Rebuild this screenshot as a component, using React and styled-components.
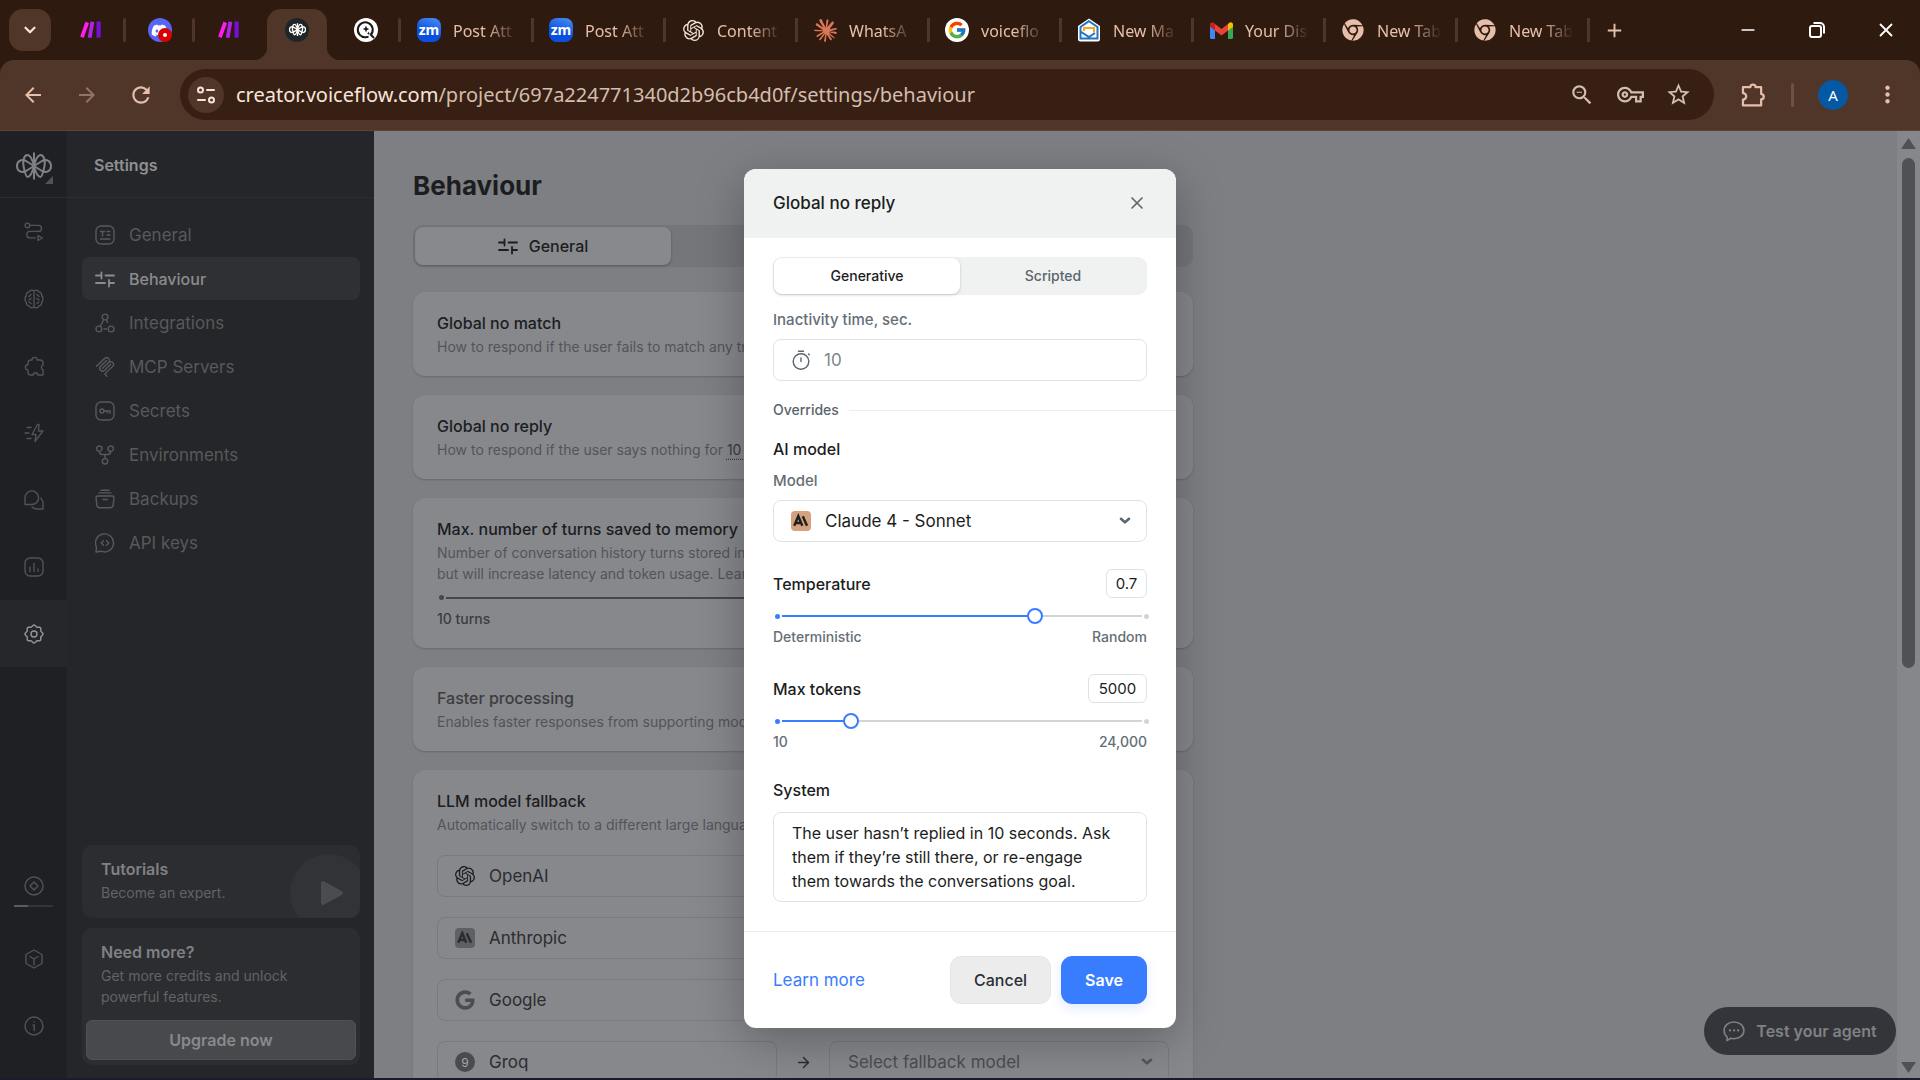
import { useState } from "react";
import styled, { createGlobalStyle } from "styled-components";
import { FaDiscord, FaChrome, FaGoogle } from "react-icons/fa";
import { FcGoogle } from "react-icons/fc";
import { SiOpenai, SiClaude } from "react-icons/si";
import {
  MdArrowBack,
  MdArrowForward,
  MdRefresh,
  MdOutlineVpnKey,
  MdStarOutline,
  MdZoomOut,
  MdMoreVert,
  MdAdd,
} from "react-icons/md";
import { ChevronDown, Minus, X, ArrowRight } from "lucide-react";

const GlobalStyle = createGlobalStyle`
  * {
    box-sizing: border-box;
  }

  body {
    margin: 0;
    font-family: Inter, "Liberation Sans", sans-serif;
    font-size: 16px;
    color: #1b1d21;
  }

  button,
  input,
  select,
  textarea {
    font: inherit;
    color: inherit;
  }

  button {
    border: 0;
    padding: 0;
    background: none;
  }

  h1,
  h2,
  h3,
  p {
    margin: 0;
  }
`;

/* ---------- icons ---------- */

const Line = styled.svg.attrs({ viewBox: "0 0 20 20" })`
  width: ${(p) => p.$size || 20}px;
  height: ${(p) => p.$size || 20}px;
  flex: none;
  fill: none;
  stroke: currentColor;
  stroke-width: 1.4;
  stroke-linecap: round;
  stroke-linejoin: round;
`;

// wavy ring of the settings gear
const scallop = (() => {
  let d = "";
  for (let i = 0; i <= 96; i++) {
    const a = (i / 96) * Math.PI * 2;
    const r = 8.2 + 0.8 * Math.cos(8 * a);
    const x = (10 + r * Math.cos(a)).toFixed(2);
    const y = (10 + r * Math.sin(a)).toFixed(2);
    d += `${i ? "L" : "M"}${x} ${y}`;
  }
  return d + "Z";
})();

const VoiceflowLogo = ({ width, stroke = 2 }) => (
  <svg
    width={width}
    viewBox="0 0 36 28"
    fill="none"
    stroke="currentColor"
    strokeWidth={stroke}
    strokeLinejoin="round"
  >
    <path d="M18 .5v27" />
    <path d="M18 14C16.500 8 14 3 11.500 3 8 3 6.500 9 7.500 14s2.500 11 4 11c2.500 0 5-5 6.500-11" />
    <path d="M18 14c1.500-6 4-11 6.500-11C28 3 29.500 9 28.500 14s-2.500 11-4 11c-2.500 0-5-5-6.500-11" />
    <path d="M18 14 10 9C5 6.500 1 9.500 1 14s4 7.500 9 5l8-5" />
    <path d="M18 14l8-5c5-2.500 9 .5 9 5s-4 7.500-9 5l-8-5" />
  </svg>
);

const icons = {
  route: (
    <>
      <circle cx="3.4" cy="3.4" r="2.3" />
      <path d="M6 3.4h8.500a3 3 0 0 1 0 6H6a3.200 3.200 0 0 0 0 6.500h5.500" />
      <path d="M14 13.500v5l4.500-2.500z" />
    </>
  ),
  brain: (
    <>
      <path d="M10 2C8.500.6 6 .9 5 3 3 3.200 2 5 2.400 6.600.6 8 .6 12 2.400 13.400 2 15 3 16.800 5 17c1 2.100 3.500 2.400 5 1 1.500 1.400 4 1.100 5-1 2-.2 3-2 2.600-3.600 1.800-1.400 1.800-5.400 0-6.800C18 5 17 3.200 15 3c-1-2.100-3.500-2.400-5-1zM10 2v16" />
      <path d="M7 5.500 5 7.500M7.200 9.500 5 10.800M5.200 13l1.800 1.500M13 5.500l2 2M12.800 9.500l2.200 1.300M14.800 13 13 14.500" />
    </>
  ),
  puzzle: (
    <path d="M8 4a2.600 2.600 0 0 1 5.200 0h3A2.800 2.800 0 0 1 19 6.800v2.400a2.300 2.300 0 0 0 0 4.400V19h-5.300a2.200 2.200 0 0 0-4.400 0H6.800A2.800 2.800 0 0 1 4 16.200V14a2.600 2.600 0 0 1 0-5.200v-2A2.800 2.800 0 0 1 6.800 4z" />
  ),
  zap: (
    <path d="M13.500 1.500 8 11.500h4l-1 7L19 8h-4.500l.5-6.500zM3 4.500h4M1 10h4M3 15.500h4" />
  ),
  chats: (
    <>
      <path d="M1 14.500V7.700a6.800 6.800 0 1 1 6.800 6.800z" />
      <path d="M16.800 8.200A7 7 0 0 1 19 12.800v6.200h-6c-2 0-3.800-.7-4.800-2" />
    </>
  ),
  chart: (
    <>
      <rect x="1" y="1" width="18" height="18" rx="5" />
      <path d="M6 14.500V10M10 14.500v-8M14 14.500v-2.500" />
    </>
  ),
  gear: (
    <>
      <path d={scallop} />
      <circle cx="10" cy="10" r="3" />
    </>
  ),
  token: (
    <>
      <circle cx="10" cy="10" r="9" />
      <path d="M10 6l4 4-4 4-4-4z" />
    </>
  ),
  box: (
    <path d="M10 1l8 4.500v9L10 19l-8-4.500v-9zM10 16v-6M6 7.500l4 2.500 4-2.500" />
  ),
  info: (
    <>
      <circle cx="10" cy="10" r="9" />
      <path d="M9 9h1.200v5.500M10 5.700v.2" />
    </>
  ),
  general: (
    <>
      <rect x="1" y="1" width="18" height="18" rx="5" />
      <path d="M5.500 6.500h4M7.500 6.500V11M12 6.500h3M12 10h3M5.500 14h9.500" />
    </>
  ),
  sliders: (
    <path
      strokeWidth="1.8"
      d="M1 6.500h5M6.500 3.500v6M10.500 6.500H19M1 14h9M14 11v6.500M14 14h5"
    />
  ),
  integrations: (
    <>
      <circle cx="10" cy="4" r="2.900" />
      <circle cx="3.900" cy="16" r="2.900" />
      <circle cx="16.100" cy="16" r="2.900" />
      <path d="M8.500 7 5.500 13M11.500 7l1 2.500M9 16h2.500" />
    </>
  ),
  secrets: (
    <>
      <rect x="1" y="1" width="18" height="18" rx="5" />
      <circle cx="7" cy="10" r="2" />
      <path d="M9 10h6v2.200M12.300 10v1.800" />
    </>
  ),
  environments: (
    <>
      <circle cx="4.300" cy="3.700" r="2.700" />
      <circle cx="15.700" cy="3.700" r="2.700" />
      <circle cx="10" cy="16.300" r="2.700" />
      <path d="M4.300 6.500c0 2 1 3 3 3h5.400c2 0 3-1 3-3M10 9.500v4" />
    </>
  ),
  backups: (
    <>
      <path d="M6 1.200h8M4 3.900h12M8 10.500h4.500" />
      <path d="M2.500 7h15c1 0 1.500.7 1.500 1.500L18.200 16a3 3 0 0 1-3 2.800H4.800a3 3 0 0 1-3-2.800L1 8.500C1 7.700 1.500 7 2.500 7z" />
    </>
  ),
  api: (
    <>
      <path d="M1 19l.5-5A9 9 0 1 1 6 18.200z" />
      <path d="M8.500 7.700 6.200 10l2.300 2.300M11.500 7.700l2.300 2.300-2.300 2.300" />
    </>
  ),
  timer: (
    <>
      <circle cx="10" cy="11.500" r="7.800" />
      <path d="M10 8v3.500M7.500 1.200h5M17.500 4l.8.800" />
    </>
  ),
  chat: (
    <>
      <path d="M3.600 18.700l.3-3A8 8 0 0 1 1 9.800C1 5 5 1.800 10 1.800s9 3.200 9 7.700-4 7.500-9 7.500c-1 0-2-.1-2.900-.4z" />
      <path strokeWidth="2" d="M6.300 9.500h.1M10 9.500h.1M13.700 9.500h.1" />
    </>
  ),
  extension: (
    <path
      strokeWidth="1.700"
      d="M1.500 4h5.700a2 2 0 0 1 4 0h4.300v5.300a2 2 0 0 1 0 4V18h-14v-4.500a2.500 2.500 0 0 0 0-5z"
    />
  ),
};

const Icon = ({ name, size }) => <Line $size={size}>{icons[name]}</Line>;

const McpIcon = () => (
  <svg width="20" height="20" viewBox="0 0 24 24" fill="currentColor">
    <path d="M15.688 2.343a2.588 2.588 0 00-3.610 0l-9.626 9.440a.863.863 0 01-1.203 0 .823.823 0 010-1.180l9.626-9.440a4.313 4.313 0 016.016 0 4.116 4.116 0 011.204 3.540 4.300 4.300 0 013.609 1.180l.05.05a4.115 4.115 0 010 5.900l-8.706 8.537a.274.274 0 000 .393l1.788 1.754a.823.823 0 010 1.180.863.863 0 01-1.203 0l-1.788-1.753a1.920 1.920 0 010-2.754l8.706-8.538a2.470 2.470 0 000-3.540l-.05-.049a2.588 2.588 0 00-3.607-.003l-7.172 7.034-.002.002-.098.097a.863.863 0 01-1.204 0 .823.823 0 010-1.180l7.273-7.133a2.470 2.470 0 00-.003-3.537z" />
    <path d="M14.485 4.703a.823.823 0 000-1.180.863.863 0 00-1.204 0l-7.119 6.982a4.115 4.115 0 000 5.900 4.314 4.314 0 006.016 0l7.120-6.982a.823.823 0 000-1.180.863.863 0 00-1.204 0l-7.119 6.982a2.588 2.588 0 01-3.610 0 2.470 2.470 0 010-3.540l7.120-6.982z" />
  </svg>
);

const Caret = ({ color }) => (
  <svg width="12" height="8" viewBox="0 0 12 8" fill="none">
    <path
      d="M2 1.800l4 3.600 4-3.600"
      stroke={color}
      strokeWidth="2.600"
      strokeLinejoin="round"
      strokeLinecap="round"
    />
  </svg>
);

const AnthropicMark = ({ bg, fg }) => (
  <svg width="20" height="20" viewBox="0 0 20 20">
    <rect width="20" height="20" rx="4" fill={bg} />
    <g fill="none" stroke={fg} strokeWidth="2.400">
      <path d="M3.200 14.800 7.300 5.200l4 9.600M4.800 12h5" />
      <path d="M11.800 5.200l4.200 9.600" />
    </g>
  </svg>
);

const MakeIcon = () => (
  <svg width="22" height="18" viewBox="0 0 22 18">
    <path d="M5.500.5 9 2.200 3.600 17 .2 15.400z" fill="#ff1df0" />
    <path d="M10.500.4l3.800.7L11.600 17l-3.800-.6z" fill="#b024e8" />
    <path d="M16.500.5h4.200v16.200h-4.200z" fill="#7410d8" />
  </svg>
);

const GmailIcon = () => (
  <svg width="23" height="17" viewBox="0 0 23 17">
    <path d="M0 3v12.500A1.500 1.500 0 0 0 1.500 17H5V6z" fill="#4285f4" />
    <path d="M23 3v12.500a1.500 1.500 0 0 1-1.500 1.500H18V6z" fill="#34a853" />
    <path d="M5 2l6.500 5L18 2v6.500l-6.500 5-6.500-5z" fill="#ea4335" />
    <path d="M0 2.500C0 .3 2.500-.6 4 .9L5 2v6.500L0 4.800z" fill="#c5221f" />
    <path d="M23 2.500c0-2.200-2.500-3.100-4-1.600L18 2v6.500l5-3.700z" fill="#fbbc04" />
  </svg>
);

const MailboxIcon = () => (
  <svg width="24" height="24" viewBox="0 0 24 24">
    <path
      d="M12 .5 23 8v13a2.500 2.500 0 0 1-2.500 2.500h-17A2.500 2.500 0 0 1 1 21V8z"
      fill="#fff"
    />
    <path
      d="M12 3.200 3.500 9v11.500h17V9zM3.500 13.500 12 19l6-4"
      fill="none"
      stroke="#2473c4"
      strokeWidth="2"
    />
    <path d="M7 13v-3h10v4.500" fill="none" stroke="#f5a623" strokeWidth="2" />
  </svg>
);

const SearchQIcon = () => (
  <svg width="24" height="24" viewBox="0 0 24 24">
    <circle cx="12" cy="12" r="12" fill="#fff" />
    <g fill="none" stroke="#1a1a1a" strokeWidth="2">
      <path d="M20 20l-3.200-3.200A7.500 7.500 0 1 0 12 19.200" />
      <path d="M12 19.200l2.500-.4" />
    </g>
    <path
      d="M12 7.500l1 2.500 2.300 1-2.300 1-1 2.500-1-2.500-2.300-1 2.300-1zM14.500 13.500l.5 1.200 1.200.5-1.200.5-.5 1.200-.5-1.200-1.200-.5 1.200-.5z"
      fill="#1a1a1a"
    />
  </svg>
);

/* ---------- browser ---------- */

const Page = styled.div`
  display: flex;
  flex-direction: column;
  height: 100vh;
  overflow: hidden;
  background: #2f1a0f;
  border-bottom: 2px solid #1c1b29;
`;

const TabStrip = styled.div`
  display: flex;
  align-items: center;
  height: 60px;
  padding-left: 9px;
  color: #e6bfab;
  font-family: "Noto Sans", "Open Sans", sans-serif;
`;

const TabSearch = styled.button`
  display: grid;
  place-items: center;
  width: 42px;
  height: 42px;
  margin-right: 5px;
  border-radius: 14px;
  background: #503629;
  color: #f5e4da;
`;

const PinnedTab = styled.button`
  position: relative;
  display: grid;
  place-items: center;
  width: 69px;
  height: 51px;
  align-self: flex-end;
  padding-bottom: 9px;
  border-radius: 14px 14px 0 0;
  background: ${(p) => (p.$active ? "#503629" : "transparent")};

  &::after {
    content: "";
    position: absolute;
    right: -1px;
    top: 9px;
    width: 3px;
    height: 24px;
    border-radius: 2px;
    background: ${(p) => (p.$divider ? "#503629" : "transparent")};
  }
`;

const ActiveTab = styled(PinnedTab)`
  width: 60px;
  margin: 0 4px;

  &::before {
    content: "";
    position: absolute;
    left: -14px;
    right: -14px;
    bottom: 0;
    height: 14px;
    background:
      radial-gradient(circle at 0 0, transparent 14px, #503629 15px) left / 14px
        14px no-repeat,
      radial-gradient(circle at 100% 0, transparent 14px, #503629 15px) right /
        14px 14px no-repeat;
  }
`;

const Badge = styled.span`
  display: grid;
  place-items: center;
  flex: none;
  width: 24px;
  height: 24px;
  border-radius: ${(p) => p.$radius || 12}px;
  background: ${(p) => p.$bg || "transparent"};
  color: ${(p) => p.$color || "#fff"};
  font-size: 14px;
  font-weight: 700;
  line-height: 20px;
`;

const RecordDot = styled.i`
  position: absolute;
  left: 33px;
  top: 19px;
  width: 14px;
  height: 14px;
  border: 5px solid #d80000;
  border-radius: 50%;
  background: #fff;
`;

const TabList = styled.div`
  display: flex;
  margin-left: 2px;
`;

const Tab = styled.button`
  display: flex;
  align-items: center;
  gap: 12px;
  width: 132px;
  height: 24px;
  padding-left: 15px;
  border-right: 3px solid #503629;
`;

const TabTitle = styled.span`
  flex: 1;
  min-width: 0;
  margin-right: 12px;
  padding-top: 2px;
  overflow: hidden;
  white-space: nowrap;
  text-align: left;
  font-size: 16px;
  line-height: 24px;
  mask-image: linear-gradient(90deg, #000 50%, transparent 98%);
`;

const NewTab = styled.button`
  display: grid;
  place-items: center;
  width: 48px;
  height: 42px;
`;

const WindowControls = styled.div`
  display: flex;
  margin-left: auto;
  color: #fff;

  button {
    display: grid;
    place-items: center;
    width: 69px;
    height: 60px;
  }
`;

const Toolbar = styled.div`
  display: flex;
  align-items: center;
  height: 71px;
  padding: 0 6px 1px;
  border-bottom: 1px solid #5f4436;
  border-radius: 14px 14px 0 0;
  background: #503629;
  color: #e6bfab;
  font-family: "Noto Sans", "Open Sans", sans-serif;
`;

const ToolButton = styled.button`
  display: grid;
  place-items: center;
  width: 54px;
  height: 48px;
  opacity: ${(p) => (p.$dim ? 0.45 : 1)};
`;

const AddressBar = styled.div`
  display: flex;
  align-items: center;
  flex: 1;
  height: 51px;
  margin: 0 13px 0 12px;
  padding: 0 12px 0 8px;
  border-radius: 26px;
  background: #372013;
  color: #d3bdae;
`;

const SiteInfo = styled.button`
  display: grid;
  place-items: center;
  width: 36px;
  height: 36px;
  margin-right: 12px;
  border-radius: 50%;
  background: #503629;
  color: #f5e4da;
`;

const Url = styled.span`
  flex: 1;
  overflow: hidden;
  white-space: nowrap;
  font-size: 20px;
  line-height: 28px;

  b {
    font-weight: 400;
    color: #f7e5dc;
  }
`;

const AddressAction = styled(ToolButton)`
  width: 48px;
`;

const ToolDivider = styled.i`
  width: 3px;
  height: 24px;
  margin: 0 10px;
  border-radius: 2px;
  background: #6e5142;
`;

const Avatar = styled.button`
  width: 30px;
  height: 30px;
  margin: 0 12px 0 14px;
  border-radius: 50%;
  background: #0558a3;
  color: #fff;
  font-size: 15px;
`;

const BrowserTab = ({ icon, title }) => (
  <Tab>
    {icon}
    <TabTitle>{title}</TabTitle>
  </Tab>
);

const zoomIcon = (
  <Badge $radius={8} $bg="linear-gradient(200deg, #4a90f5, #0b4fe0 60%)">
    zm
  </Badge>
);

const chromeIcon = (
  <Badge $color="#e6bfab">
    <FaChrome size={22} />
  </Badge>
);

const tabs = [
  { icon: zoomIcon, title: "Post Att" },
  { icon: zoomIcon, title: "Post Att" },
  {
    icon: (
      <Badge $color="#f5e4da">
        <SiOpenai size={21} />
      </Badge>
    ),
    title: "Content",
  },
  {
    icon: (
      <Badge $color="#d97757">
        <SiClaude size={23} />
      </Badge>
    ),
    title: "WhatsA",
  },
  {
    icon: (
      <Badge $bg="#fff">
        <FcGoogle size={20} />
      </Badge>
    ),
    title: "voiceflo",
  },
  { icon: <MailboxIcon />, title: "New Ma" },
  {
    icon: (
      <Badge>
        <GmailIcon />
      </Badge>
    ),
    title: "Your Dis",
  },
  { icon: chromeIcon, title: "New Tab" },
  { icon: chromeIcon, title: "New Tab" },
];

const Browser = () => (
  <header>
    <TabStrip>
      <TabSearch aria-label="Search tabs">
        <ChevronDown size={18} strokeWidth={3} />
      </TabSearch>
      <PinnedTab $divider aria-label="Make">
        <MakeIcon />
      </PinnedTab>
      <PinnedTab $divider aria-label="Discord">
        <Badge $bg="#5865f2">
          <FaDiscord size={17} />
        </Badge>
        <RecordDot />
      </PinnedTab>
      <PinnedTab aria-label="Make">
        <MakeIcon />
      </PinnedTab>
      <ActiveTab $active aria-label="Voiceflow">
        <Badge $bg="#1f2528">
          <VoiceflowLogo width={17} stroke={3} />
        </Badge>
      </ActiveTab>
      <PinnedTab $divider aria-label="Search">
        <SearchQIcon />
      </PinnedTab>
      <TabList>
        {tabs.map((tab, i) => (
          <BrowserTab key={i} {...tab} />
        ))}
      </TabList>
      <NewTab aria-label="New tab">
        <MdAdd size={23} />
      </NewTab>
      <WindowControls>
        <button aria-label="Minimize">
          <Minus size={20} />
        </button>
        <button aria-label="Restore">
          <svg
            width="16"
            height="16"
            viewBox="0 0 16 16"
            fill="none"
            stroke="currentColor"
            strokeWidth="2"
          >
            <rect x="1" y="4" width="11" height="11" rx="2" />
            <path d="M4.500 1H11a4 4 0 0 1 4 4v6.500" />
          </svg>
        </button>
        <button aria-label="Close">
          <X size={22} />
        </button>
      </WindowControls>
    </TabStrip>
    <Toolbar>
      <ToolButton aria-label="Back">
        <MdArrowBack size={24} />
      </ToolButton>
      <ToolButton $dim aria-label="Forward">
        <MdArrowForward size={24} />
      </ToolButton>
      <ToolButton aria-label="Reload">
        <MdRefresh size={26} />
      </ToolButton>
      <AddressBar>
        <SiteInfo aria-label="Site information">
          <Line>
            <g strokeWidth="2">
              <circle cx="4.500" cy="5" r="2.500" />
              <path d="M11 5h7M2 15h7" />
              <circle cx="15.500" cy="15" r="2.500" />
            </g>
          </Line>
        </SiteInfo>
        <Url>
          <b>creator.voiceflow.com</b>
          /project/697a224771340d2b96cb4d0f/settings/behaviour
        </Url>
        <AddressAction aria-label="Zoom">
          <MdZoomOut size={26} />
        </AddressAction>
        <AddressAction aria-label="Passwords">
          <MdOutlineVpnKey size={27} />
        </AddressAction>
        <AddressAction aria-label="Bookmark">
          <MdStarOutline size={27} />
        </AddressAction>
      </AddressBar>
      <ToolButton aria-label="Extensions">
        <Icon name="extension" size={26} />
      </ToolButton>
      <ToolDivider />
      <Avatar aria-label="Profile">A</Avatar>
      <ToolButton aria-label="Menu">
        <MdMoreVert size={27} />
      </ToolButton>
    </Toolbar>
  </header>
);

/* ---------- app shell ---------- */

const Shell = styled.div`
  position: relative;
  display: flex;
  flex: 1;
  min-height: 0;
  overflow: hidden;
  background: #7e7f83;
`;

const Rail = styled.nav`
  display: flex;
  flex-direction: column;
  width: 67px;
  background: #1f2023;
  color: #525356;
`;

const RailLogo = styled.div`
  position: relative;
  display: grid;
  place-items: center;
  height: 67px;
  padding-top: 3px;
  border-bottom: 1px solid #2b2c2f;
  color: #808185;

  &::after {
    content: "";
    position: absolute;
    right: 14px;
    bottom: 13px;
    border: 4px solid;
    border-color: transparent #525356 #525356 transparent;
  }
`;

const RailItem = styled.button`
  display: flex;
  flex-direction: column;
  align-items: center;
  justify-content: center;
  height: 67px;
  background: ${(p) => (p.$active ? "#26272a" : "transparent")};
  color: ${(p) => (p.$active ? "#949598" : "inherit")};
`;

const RailBottom = styled.div`
  display: flex;
  flex-direction: column;
  margin-top: auto;
  padding-bottom: 19px;
`;

const Credits = styled.progress`
  appearance: none;
  width: 39px;
  height: 2px;
  margin-top: 9px;

  &::-webkit-progress-bar {
    background: #333437;
  }

  &::-webkit-progress-value {
    background: #5b5c5f;
  }
`;

const Sidebar = styled.aside`
  display: flex;
  flex-direction: column;
  width: 307px;
  background: #252629;
`;

const SidebarHead = styled.h2`
  height: 67px;
  padding: 22px 27px 0;
  border-bottom: 1px solid #2d2e31;
  color: #8f9093;
  font-size: 16px;
  font-weight: 600;
  line-height: 24px;
`;

const NavList = styled.div`
  display: flex;
  flex-direction: column;
  gap: 1px;
  padding: 15px 14px 0 15px;
`;

const NavItem = styled.a`
  display: flex;
  align-items: center;
  gap: 14px;
  height: 43px;
  padding-left: 13px;
  border-radius: 8px;
  background: ${(p) => (p.$active ? "#2f3033" : "transparent")};
  color: ${(p) => (p.$active ? "#8b8c8f" : "#58595c")};
  font-size: ${(p) => (p.$active ? 16 : 17)}px;
  font-weight: ${(p) => (p.$active ? 500 : 400)};
  text-decoration: none;
`;

const PromoList = styled.div`
  display: flex;
  flex-direction: column;
  gap: 10px;
  margin-top: auto;
  padding: 0 14px 13px 15px;
`;

const Promo = styled.section`
  position: relative;
  overflow: hidden;
  padding: 12px 4px 5px;
  border-radius: 10px;
  background: #2c2d30;
  color: #626366;

  h3 {
    padding: 0 15px;
    color: #808184;
    font-size: 16px;
    font-weight: 600;
    line-height: 24px;
  }

  p {
    padding: 1px 15px 10px;
    font-size: 14px;
    line-height: 21px;
  }
`;

const PlayCircle = styled.span`
  position: absolute;
  left: 208px;
  top: 9px;
  display: grid;
  place-items: center;
  width: 78px;
  height: 78px;
  padding-left: 6px;
  border-radius: 50%;
  background: #323336;
  color: #4b4c4f;
`;

const UpgradeButton = styled.button`
  width: 100%;
  height: 40px;
  margin-top: 3px;
  border: 1px solid #505154;
  border-radius: 6px;
  background: #48494c;
  color: #88898c;
  font-weight: 600;
`;

const navItems = [
  { icon: <Icon name="general" />, label: "General" },
  { icon: <Icon name="sliders" />, label: "Behaviour", active: true },
  { icon: <Icon name="integrations" />, label: "Integrations" },
  { icon: <McpIcon />, label: "MCP Servers" },
  { icon: <Icon name="secrets" />, label: "Secrets" },
  { icon: <Icon name="environments" />, label: "Environments" },
  { icon: <Icon name="backups" />, label: "Backups" },
  { icon: <Icon name="api" />, label: "API keys" },
];

const railItems = ["route", "brain", "puzzle", "zap", "chats", "chart", "gear"];

/* ---------- settings content ---------- */

const Main = styled.main`
  flex: 1;
  min-width: 0;
  padding: 37px 39px 0;
  overflow: hidden;
`;

const Content = styled.div`
  display: flex;
  flex-direction: column;
  gap: 19px;
  max-width: 780px;
`;

const PageTitle = styled.h1`
  font-size: 26px;
  font-weight: 700;
  line-height: 36px;
`;

const PageTabs = styled.div`
  height: 42px;
  margin: 2px 0 6px;
  padding: 2px;
  border-radius: 10px;
  background: #75767a;
`;

const PageTab = styled.button`
  display: flex;
  align-items: center;
  justify-content: center;
  gap: 11px;
  width: 33%;
  height: 38px;
  border-radius: 8px;
  background: #88898d;
  box-shadow: 0 1px 3px rgba(0, 0, 0, 0.25);
  font-weight: 500;
`;

const Card = styled.section`
  padding: 18px 24px 19px;
  border-radius: 12px;
  background: #87888c;
  box-shadow: 0 1px 2px rgba(0, 0, 0, 0.18);
`;

const CardTitle = styled.h3`
  font-size: 16px;
  font-weight: 500;
  line-height: 26px;
  color: ${(p) => (p.$muted ? "#3b3c40" : "#1b1d21")};
`;

const CardText = styled.p`
  overflow: hidden;
  white-space: nowrap;
  color: #535458;
  font-size: 14px;
  line-height: 21px;

  u {
    color: #3b3c40;
    text-decoration: underline dotted;
    text-underline-offset: 4px;
  }
`;

const TurnsTrack = styled.div`
  display: flex;
  align-items: center;
  gap: 2px;
  margin: 11px 0 8px;
  padding-left: 2px;

  &::before {
    content: "";
    width: 5px;
    height: 5px;
    border-radius: 50%;
    background: #46474b;
  }

  &::after {
    content: "";
    flex: 1;
    height: 2px;
    background: #46474b;
  }
`;

const TurnsLabel = styled.p`
  color: #3b3c40;
  font-size: 14px;
  font-weight: 500;
  line-height: 21px;
`;

const FallbackRow = styled.div`
  display: grid;
  grid-template-columns: 1fr 52px 1fr;
  align-items: center;
  justify-items: center;
  margin-top: 20px;
`;

const Provider = styled.div`
  display: flex;
  align-items: center;
  gap: 14px;
  width: 100%;
  height: 42px;
  padding-left: 17px;
  border: 1px solid #797a7e;
  border-radius: 8px;
  color: #2b2c30;
  font-size: 17px;
`;

const GroqMark = styled.span`
  display: grid;
  place-items: center;
  width: 20px;
  height: 20px;
  border-radius: 50%;
  background: #4a4b4f;
  color: #a5a6a9;
  font-size: 12px;
`;

const SelectBox = styled.div`
  display: grid;
  grid-template-columns: 1fr;
  align-items: center;
  width: 100%;

  > * {
    grid-area: 1 / 1;
  }

  > svg {
    margin-left: 18px;
    pointer-events: none;
  }

  > svg:last-child {
    justify-self: end;
    margin-right: 16px;
  }
`;

const Select = styled.select`
  appearance: none;
  width: 100%;
  height: 42px;
  padding-left: ${(p) => p.$pad}px;
  border: 1px solid ${(p) => p.$border};
  border-radius: 8px;
  background: transparent;
  color: ${(p) => p.$color};
  font-size: 17px;
`;

const Scrollbar = styled.div`
  display: flex;
  flex-direction: column;
  align-items: center;
  width: 23px;
  padding: 7px 0 5px;
  background: #86878b;
  color: #505155;
`;

const ScrollTrack = styled.div`
  flex: 1;
  width: 13px;
  margin: 9px 0;

  &::before {
    content: "";
    display: block;
    height: 57%;
    border-radius: 7px;
    background: #505155;
  }
`;

const TestAgent = styled.button`
  position: absolute;
  right: 24px;
  bottom: 23px;
  display: flex;
  align-items: center;
  justify-content: center;
  gap: 11px;
  width: 192px;
  height: 48px;
  border-radius: 24px;
  background: #34353a;
  color: #808185;
  font-weight: 600;
`;

const providers = [
  { icon: <SiOpenai size={20} color="#1b1d21" />, name: "OpenAI" },
  { icon: <AnthropicMark bg="#5f6064" fg="#2b2c30" />, name: "Anthropic" },
  { icon: <FaGoogle size={20} color="#4c4d51" />, name: "Google" },
  { icon: <GroqMark>9</GroqMark>, name: "Groq" },
];

const Settings = () => (
  <Main>
    <Content>
      <PageTitle>Behaviour</PageTitle>
      <PageTabs>
        <PageTab>
          <Icon name="sliders" />
          General
        </PageTab>
      </PageTabs>
      <Card>
        <CardTitle>Global no match</CardTitle>
        <CardText>
          How to respond if the user fails to match any trigger.
        </CardText>
      </Card>
      <Card>
        <CardTitle>Global no reply</CardTitle>
        <CardText>
          How to respond if the user says nothing for <u>10 seconds</u>.
        </CardText>
      </Card>
      <Card>
        <CardTitle>Max. number of turns saved to memory</CardTitle>
        <CardText>
          Number of conversation history turns stored in memory. Higher values
          <br />
          but will increase latency and token usage. Learn more
        </CardText>
        <TurnsTrack />
        <TurnsLabel>10 turns</TurnsLabel>
      </Card>
      <Card>
        <CardTitle $muted>Faster processing</CardTitle>
        <CardText>Enables faster responses from supporting models.</CardText>
      </Card>
      <Card>
        <CardTitle>LLM model fallback</CardTitle>
        <CardText>
          Automatically switch to a different large language model.
        </CardText>
        {providers.map((p) => (
          <FallbackRow key={p.name}>
            <Provider>
              {p.icon}
              {p.name}
            </Provider>
            <ArrowRight size={17} color="#2b2c30" />
            <SelectBox>
              <Select
                $pad={18}
                $border="#797a7e"
                $color="#4c4d51"
                aria-label={`${p.name} fallback`}
              >
                <option>Select fallback model</option>
              </Select>
              <Caret color="#55565a" />
            </SelectBox>
          </FallbackRow>
        ))}
      </Card>
    </Content>
  </Main>
);

/* ---------- modal ---------- */

const Overlay = styled.div`
  position: absolute;
  inset: 0;
  display: flex;
  align-items: flex-start;
  justify-content: center;
  padding-top: 38px;
`;

const Modal = styled.div`
  width: 432px;
  overflow: hidden;
  border-radius: 12px;
  background: #fff;
  box-shadow: 0 12px 48px rgba(0, 0, 0, 0.28);
`;

const ModalHead = styled.div`
  display: flex;
  align-items: center;
  justify-content: space-between;
  height: 69px;
  padding: 0 29px 2px;
  background: #f0f2f1;

  h2 {
    font-size: 17px;
    font-weight: 500;
  }

  button {
    display: grid;
    color: #5b656d;
  }
`;

const ModalBody = styled.div`
  padding: 19px 29px 29px;
`;

const Segmented = styled.div`
  display: grid;
  grid-template-columns: 1fr 1fr;
  margin-bottom: 15px;
  padding: 1px;
  border-radius: 9px;
  background: #f0f2f1;
`;

const Segment = styled.button`
  height: 36px;
  padding-bottom: 2px;
  border-radius: 8px;
  background: ${(p) => (p.$active ? "#fff" : "transparent")};
  box-shadow: ${(p) => (p.$active ? "0 1px 3px rgba(0, 0, 0, 0.2)" : "none")};
  color: ${(p) => (p.$active ? "#1b1d21" : "#5b656d")};
  font-size: 14px;
  font-weight: 500;
`;

const FieldLabel = styled.label`
  display: block;
  margin-bottom: 9px;
  color: #656e76;
  font-size: 15px;
  font-weight: 500;
  line-height: 20px;
`;

const TimeField = styled.div`
  display: flex;
  align-items: center;
  gap: 13px;
  height: 42px;
  padding: 0 17px;
  border: 1px solid #dfe2e4;
  border-radius: 8px;
  color: #5b656d;

  input {
    flex: 1;
    min-width: 0;
    padding: 0;
    border: 0;
    outline: 0;
    font-size: 17px;

    &::placeholder {
      color: #7c868e;
    }
  }
`;

const Divider = styled.div`
  display: flex;
  align-items: center;
  gap: 10px;
  margin: 19px -29px 17px 0;
  color: #5b656d;
  font-size: 14px;
  font-weight: 500;
  line-height: 20px;

  &::after {
    content: "";
    flex: 1;
    height: 1px;
    background: #eceeee;
  }
`;

const GroupTitle = styled.label`
  display: block;
  margin-bottom: 10px;
  font-size: 16px;
  font-weight: 500;
  line-height: 24px;
`;

const SliderBlock = styled.div`
  margin-top: 27px;
`;

const SliderHead = styled.div`
  display: flex;
  align-items: center;
  justify-content: space-between;
  height: 29px;
  margin-bottom: 10px;

  label {
    font-weight: 500;
  }

  input {
    width: ${(p) => p.$box}px;
    height: 29px;
    padding: 0;
    border: 1px solid #dfe2e4;
    border-radius: 6px;
    text-align: center;
    font-size: 15px;
  }
`;

const Track = styled.div`
  position: relative;
  display: flex;
  align-items: center;
  gap: 2px;
  height: 16px;
  margin: 0 -2px 3px 2px;
`;

const Dot = styled.i`
  width: 5px;
  height: 5px;
  border-radius: 50%;
  background: ${(p) => p.$color};
`;

const Bar = styled.div`
  flex: 1;
  height: 2px;
  background: #d2d5d6;
`;

const Fill = styled.div`
  height: 2px;
  background: #397dff;
`;

const Range = styled.input`
  position: absolute;
  inset: 0 -6px 0 -10px;
  appearance: none;
  margin: 0;
  background: transparent;

  &::-webkit-slider-thumb {
    appearance: none;
    width: 16px;
    height: 16px;
    border: 2px solid #397dff;
    border-radius: 50%;
    background: #fff;
  }
`;

const Ends = styled.div`
  display: flex;
  justify-content: space-between;
  color: #656e76;
  font-size: 14px;
  font-weight: 500;
  line-height: 20px;
`;

const SystemTitle = styled(GroupTitle)`
  margin-top: 26px;
`;

const Prompt = styled.textarea`
  display: block;
  width: 100%;
  height: 90px;
  padding: 8px 18px;
  border: 1px solid #dfe2e4;
  border-radius: 8px;
  outline: 0;
  resize: none;
  overflow: hidden;
  line-height: 24px;
`;

const ModalFoot = styled.div`
  display: flex;
  align-items: center;
  gap: 10px;
  padding: 24px 29px;
  border-top: 1px solid #eceeee;

  a {
    margin-right: auto;
    color: #397dff;
    font-size: 17px;
    text-decoration: none;
  }
`;

const FootButton = styled.button`
  height: 48px;
  padding: 0 23px;
  border: 1px solid ${(p) => (p.$primary ? "#397dff" : "#e4e5e5")};
  border-radius: 11px;
  background: ${(p) => (p.$primary ? "#397dff" : "#ececec")};
  box-shadow: ${(p) =>
    p.$primary ? "0 4px 12px rgba(57, 125, 255, 0.16)" : "none"};
  color: ${(p) => (p.$primary ? "#fff" : "#2b2f34")};
  font-weight: ${(p) => (p.$primary ? 600 : 500)};
`;

const Slider = ({ id, label, min, max, step, initial, from, to, box }) => {
  const [value, setValue] = useState(initial);
  const percent = ((value - min) / (max - min)) * 100;

  return (
    <SliderBlock>
      <SliderHead $box={box}>
        <label htmlFor={id}>{label}</label>
        <input
          id={id}
          value={value}
          onChange={(e) => setValue(e.target.value)}
        />
      </SliderHead>
      <Track>
        <Dot $color="#397dff" />
        <Bar>
          <Fill style={{ width: `${percent}%` }} />
        </Bar>
        <Dot $color="#d2d5d6" />
        <Range
          type="range"
          aria-label={label}
          min={min}
          max={max}
          step={step}
          value={value}
          onChange={(e) => setValue(e.target.value)}
        />
      </Track>
      <Ends>
        <span>{from}</span>
        <span>{to}</span>
      </Ends>
    </SliderBlock>
  );
};

const prompt = `The user hasn’t replied in 10 seconds. Ask
them if they’re still there, or re-engage
them towards the conversations goal.`;

const NoReplyModal = () => (
  <Overlay>
    <Modal role="dialog" aria-label="Global no reply">
      <ModalHead>
        <h2>Global no reply</h2>
        <button aria-label="Close">
          <X size={20} strokeWidth={2} />
        </button>
      </ModalHead>
      <ModalBody>
        <Segmented>
          <Segment $active>Generative</Segment>
          <Segment>Scripted</Segment>
        </Segmented>
        <FieldLabel htmlFor="inactivity">Inactivity time, sec.</FieldLabel>
        <TimeField>
          <Icon name="timer" />
          <input id="inactivity" placeholder="10" />
        </TimeField>
        <Divider>Overrides</Divider>
        <GroupTitle as="h3">AI model</GroupTitle>
        <FieldLabel htmlFor="model">Model</FieldLabel>
        <SelectBox>
          <Select id="model" $pad={51} $border="#dfe2e4" $color="#1b1d21">
            <option>Claude 4 - Sonnet</option>
          </Select>
          <AnthropicMark bg="#d4a27f" fg="#1f1f1e" />
          <Caret color="#5b656d" />
        </SelectBox>
        <Slider
          id="temperature"
          label="Temperature"
          min={0}
          max={1}
          step={0.1}
          initial={0.7}
          from="Deterministic"
          to="Random"
          box={41}
        />
        <Slider
          id="tokens"
          label="Max tokens"
          min={10}
          max={24000}
          step={1}
          initial={5000}
          from="10"
          to="24,000"
          box={59}
        />
        <SystemTitle htmlFor="system">System</SystemTitle>
        <Prompt id="system" defaultValue={prompt} />
      </ModalBody>
      <ModalFoot>
        <a href="#learn">Learn more</a>
        <FootButton>Cancel</FootButton>
        <FootButton $primary>Save</FootButton>
      </ModalFoot>
    </Modal>
  </Overlay>
);

const App = () => {
  return (
    <Page>
      <GlobalStyle />
      <Browser />
      <Shell>
        <Rail>
          <RailLogo>
            <VoiceflowLogo width={36} />
          </RailLogo>
          {railItems.map((name) => (
            <RailItem key={name} $active={name === "gear"} aria-label={name}>
              <Icon name={name} />
            </RailItem>
          ))}
          <RailBottom>
            <RailItem aria-label="Credits">
              <Icon name="token" />
              <Credits value={36} max={100} />
            </RailItem>
            <RailItem aria-label="Releases">
              <Icon name="box" />
            </RailItem>
            <RailItem aria-label="Help">
              <Icon name="info" />
            </RailItem>
          </RailBottom>
        </Rail>
        <Sidebar>
          <SidebarHead>Settings</SidebarHead>
          <NavList>
            {navItems.map(({ icon, label, active }) => (
              <NavItem key={label} href={`#${label}`} $active={active}>
                {icon}
                {label}
              </NavItem>
            ))}
          </NavList>
          <PromoList>
            <Promo>
              <PlayCircle>
                <svg width="24" height="28" viewBox="0 0 24 28">
                  <path
                    d="M3 4v20l18-10z"
                    fill="currentColor"
                    stroke="currentColor"
                    strokeWidth="4"
                    strokeLinejoin="round"
                  />
                </svg>
              </PlayCircle>
              <h3>Tutorials</h3>
              <p>Become an expert.</p>
            </Promo>
            <Promo>
              <h3>Need more?</h3>
              <p>Get more credits and unlock powerful features.</p>
              <UpgradeButton>Upgrade now</UpgradeButton>
            </Promo>
          </PromoList>
        </Sidebar>
        <Settings />
        <Scrollbar>
          <svg width="15" height="11" viewBox="0 0 15 11" fill="currentColor">
            <path d="M7.500 0 15 11H0z" />
          </svg>
          <ScrollTrack />
          <svg width="15" height="11" viewBox="0 0 15 11" fill="currentColor">
            <path d="M7.500 11 0 0h15z" />
          </svg>
        </Scrollbar>
        <TestAgent>
          <Icon name="chat" size={22} />
          Test your agent
        </TestAgent>
        <NoReplyModal />
      </Shell>
    </Page>
  );
};

export default App;
